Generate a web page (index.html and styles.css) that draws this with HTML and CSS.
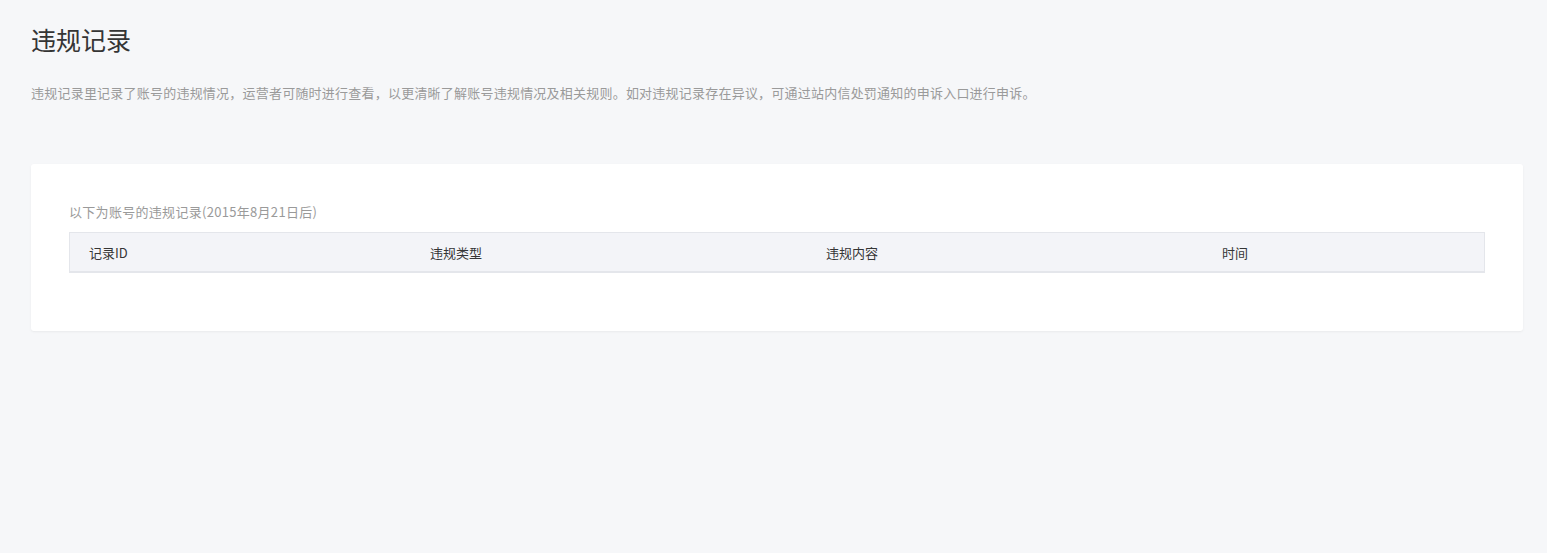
FILE: index.html
```html
<!DOCTYPE html>
<html lang="zh-CN">

<head>
    <meta charset="UTF-8">
    <title>违规记录</title>
    <link rel="stylesheet" href="styles.css">
</head>

<body>
    <div class="page">
        <h2 class="page-title">违规记录</h2>
        <p class="page-desc">违规记录里记录了账号的违规情况，运营者可随时进行查看，以更清晰了解账号违规情况及相关规则。如对违规记录存在异议，可通过站内信处罚通知的申诉入口进行申诉。</p>

        <div class="card">
            <div class="card-tip">以下为账号的违规记录(2015年8月21日后)</div>
            <div class="table">
                <div class="table-head">
                    <div class="th">记录ID</div>
                    <div class="th">违规类型</div>
                    <div class="th">违规内容</div>
                    <div class="th">时间</div>
                </div>
            </div>
        </div>
    </div>
</body>

</html>
```

FILE: styles.css
```css
* {
    box-sizing: border-box;
}

html,
body {
    margin: 0;
    padding: 0;
    background: #f6f7f9;
}

body {
    font-family: "Noto Sans CJK SC", "Liberation Sans", sans-serif;
    color: #353535;
}

.page {
    padding: 23px 24px 40px 31px;
}

.page-title {
    margin: 0;
    font-size: 25px;
    font-weight: normal;
    line-height: 32px;
    color: #353535;
}

.page-desc {
    margin: 28px 0 0;
    font-size: 13px;
    line-height: 20px;
    letter-spacing: .22px;
    color: #9a9a9a;
}

.card {
    margin-top: 61px;
    background: #fff;
    border-radius: 3px;
    box-shadow: 0 1px 2px rgba(150, 150, 150, .12);
    padding: 38px 38px 58px;
}

.card-tip {
    font-size: 13px;
    line-height: 20px;
    letter-spacing: .3px;
    color: #9a9a9a;
    margin-bottom: 10px;
}

.table {
    border: 1px solid #e4e6eb;
    border-bottom-width: 2px;
    background: #f3f4f8;
}

.table-head {
    display: grid;
    grid-template-columns: 341px 396px 396px 1fr;
    height: 38px;
    align-items: center;
}

.th {
    padding-left: 19px;
    font-size: 13px;
    color: #353535;
}
```
